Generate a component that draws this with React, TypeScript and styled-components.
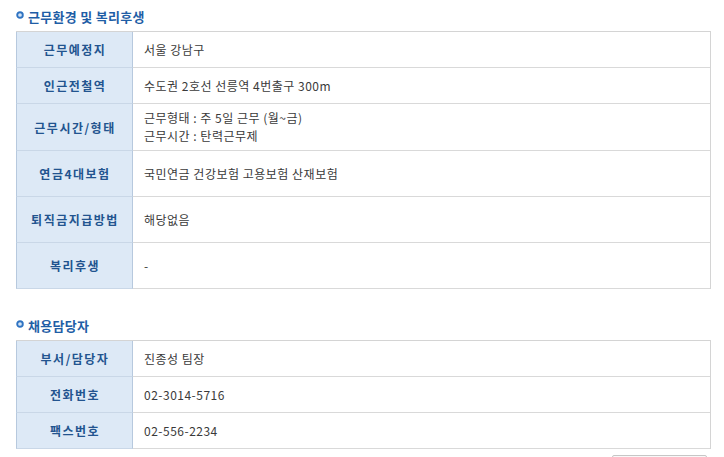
import React from 'react';
import styled, { createGlobalStyle } from 'styled-components';

const GlobalStyle = createGlobalStyle`
    html, body {
        margin: 0;
        padding: 0;
        background: #ffffff;
    }
    body {
        font-family: "Noto Sans CJK KR", "Noto Sans", "Liberation Sans", sans-serif;
        font-size: 12px;
        color: #333333;
    }
`;

type Item = { label: string; lines: string[]; height: number };

const workInfo: Item[] = [
    { label: '근무예정지', lines: ['서울 강남구'], height: 36 },
    { label: '인근전철역', lines: ['수도권 2호선 선릉역 4번출구 300m'], height: 36 },
    { label: '근무시간/형태', lines: ['근무형태 : 주 5일 근무 (월~금)', '근무시간 : 탄력근무제'], height: 47 },
    { label: '연금4대보험', lines: ['국민연금 건강보험 고용보험 산재보험'], height: 46 },
    { label: '퇴직금지급방법', lines: ['해당없음'], height: 46 },
    { label: '복리후생', lines: ['-'], height: 46 },
];

const contactInfo: Item[] = [
    { label: '부서/담당자', lines: ['진종성 팀장'], height: 36 },
    { label: '전화번호', lines: ['02-3014-5716'], height: 36 },
    { label: '팩스번호', lines: ['02-556-2234'], height: 36 },
];

const Bullet = () => (
    <svg width="8" height="8" viewBox="0 0 8 8">
        <circle cx="4" cy="4" r="2.8" fill="#d4e4f5" stroke="#2f73c2" strokeWidth="1.9" />
    </svg>
);

const InfoTable: React.FC<{ items: Item[] }> = ({ items }) => (
    <Table>
        {items.map(item => (
            <Row key={item.label} $height={item.height}>
                <Label>{item.label}</Label>
                <Value>
                    {item.lines.map(line => (
                        <div key={line}>{line}</div>
                    ))}
                </Value>
            </Row>
        ))}
    </Table>
);

export default function App() {
    return (
        <>
            <GlobalStyle />
            <Page>
                <Section>
                    <SectionTitle>
                        <Bullet />
                        <span>근무환경 및 복리후생</span>
                    </SectionTitle>
                    <InfoTable items={workInfo} />
                </Section>
                <Section $gap={25}>
                    <SectionTitle>
                        <Bullet />
                        <span>채용담당자</span>
                    </SectionTitle>
                    <InfoTable items={contactInfo} />
                </Section>
                <Buttons>
                    <ListButton aria-label="목록보기" />
                </Buttons>
            </Page>
        </>
    );
}

const Page = styled.div`
    width: 695px;
    padding-left: 16px;
`;

const Section = styled.section<{ $gap?: number }>`
    margin-top: ${p => p.$gap ?? 0}px;
`;

const SectionTitle = styled.h3`
    display: flex;
    align-items: center;
    gap: 4px;
    height: 22px;
    margin: 5px 0 4px 0;
    font-size: 13px;
    font-weight: 700;
    color: #1f5ea6;
    letter-spacing: 0.3px;

    svg {
        flex: none;
        margin-top: -2px;
    }
`;

const Table = styled.div`
    border-top: 1px solid #d4d4d4;
    border-right: 1px solid #d4d4d4;
`;

const Row = styled.div<{ $height: number }>`
    display: grid;
    grid-template-columns: 117px 1fr;
    height: ${p => p.$height}px;
`;

const Label = styled.div`
    display: flex;
    align-items: center;
    justify-content: center;
    background: #dde9f6;
    border-left: 1px solid #b7c9de;
    border-right: 1px solid #b7c9de;
    border-bottom: 1px solid #c9d7e7;
    font-weight: 700;
    color: #22548f;
    letter-spacing: 1.5px;
    padding-left: 1px;
`;

const Value = styled.div`
    display: flex;
    flex-direction: column;
    justify-content: center;
    padding-left: 11px;
    border-bottom: 1px solid #d9d9d9;
    line-height: 18px;
    color: #3a3a3a;
    letter-spacing: 0.5px;
`;

const Buttons = styled.div`
    display: flex;
    justify-content: flex-end;
    padding-right: 4px;
    margin-top: 6px;
`;

const ListButton = styled.button`
    width: 95px;
    height: 26px;
    border: 1px solid #c6c6c6;
    border-radius: 2px;
    background: #f8f8f8;
`;
